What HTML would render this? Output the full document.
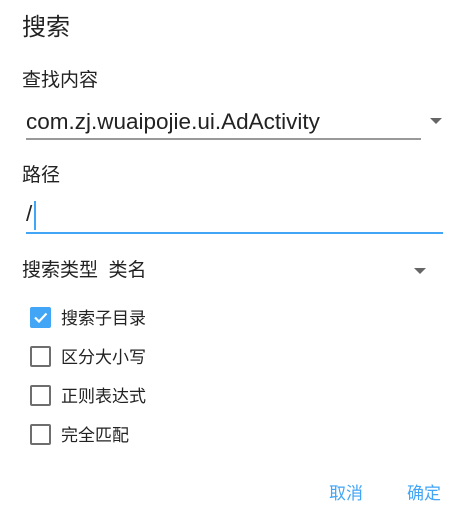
<!DOCTYPE html>
<html><head><meta charset="utf-8"><style>
body{margin:0;width:469px;height:521px;background:#fff;position:relative;overflow:hidden;font-family:"Liberation Sans","Noto Sans CJK SC",sans-serif;color:#222}
.a{position:absolute;white-space:nowrap;line-height:1}
.cb{position:absolute;left:30px;width:17px;height:17px;border:2px solid #6e6e6e;border-radius:2px}
.lbl{position:absolute;left:61px;font-size:17px;line-height:1;color:#222}
.tri{position:absolute;width:0;height:0;border-left:6px solid transparent;border-right:6px solid transparent;border-top:6px solid #666}
</style></head><body>
<div class="a" style="left:22px;top:16px;font-size:24px">搜索</div>
<div class="a" style="left:22px;top:71px;font-size:19px">查找内容</div>
<div class="a" style="left:26px;top:111px;font-size:22.5px">com.zj.wuaipojie.ui.AdActivity</div>
<div style="position:absolute;left:26px;top:138px;width:395px;height:1.5px;background:#999"></div>
<div class="tri" style="left:430px;top:118px"></div>
<div class="a" style="left:22px;top:166px;font-size:19px">路径</div>
<div class="a" style="left:26px;top:203px;font-size:22.5px">/</div>
<div style="position:absolute;left:34px;top:201px;width:2px;height:29px;background:#42a5f5"></div>
<div style="position:absolute;left:26px;top:232px;width:417px;height:2px;background:#42a5f5"></div>
<div class="a" style="left:22px;top:261px;font-size:19px">搜索类型&nbsp;&nbsp;类名</div>
<div class="tri" style="left:414px;top:268px"></div>
<div class="cb" style="top:307px;background:#42a5f5;border-color:#42a5f5"><svg width="17" height="17" viewBox="0 0 17 17" style="position:absolute;left:0;top:0"><path d="M3 8.5 L7 12.5 L14.5 4.5" stroke="#fff" stroke-width="2.2" fill="none"/></svg></div>
<div class="lbl" style="top:310px">搜索子目录</div>
<div class="cb" style="top:346px"></div>
<div class="lbl" style="top:349px">区分大小写</div>
<div class="cb" style="top:385px"></div>
<div class="lbl" style="top:388px">正则表达式</div>
<div class="cb" style="top:424px"></div>
<div class="lbl" style="top:427px">完全匹配</div>
<div class="a" style="left:329px;top:485px;font-size:17px;color:#42a5f5">取消</div>
<div class="a" style="left:407px;top:485px;font-size:17px;color:#42a5f5">确定</div>
</body></html>
